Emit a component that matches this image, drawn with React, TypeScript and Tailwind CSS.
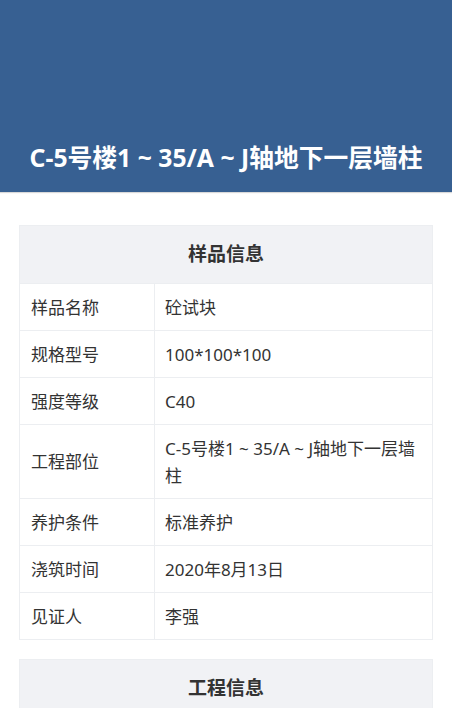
const sample: [string, string][] = [
  ['样品名称', '砼试块'],
  ['规格型号', '100*100*100'],
  ['强度等级', 'C40'],
  ['工程部位', 'C-5号楼1 ~ 35/A ~ J轴地下一层墙柱'],
  ['养护条件', '标准养护'],
  ['浇筑时间', '2020年8月13日'],
  ['见证人', '李强'],
]

function InfoTable({ title, rows }: { title: string; rows: [string, string][] }) {
  return (
    <div className="mx-[19px] border border-[#eceef1]">
      <div className="bg-[#f1f2f5] py-[15px] text-center text-[19px] leading-[27px] font-bold text-[#333]">
        {title}
      </div>
      {rows.map(([k, v], i) => (
        <div key={i} className="flex border-t border-[#eceef1] text-[17px] leading-[27px] text-[#333]">
          <div className="flex w-[135px] shrink-0 items-center border-r border-[#eceef1] py-[9.5px] pl-[11px]">{k}</div>
          <div className="flex flex-1 items-center py-[9.5px] pl-[10px] pr-[12px]">{v}</div>
        </div>
      ))}
    </div>
  )
}

export default function App() {
  return (
    <div
      className="min-h-screen bg-white"
      style={{ fontFamily: '"Noto Sans", "Noto Sans CJK SC", sans-serif' }}
    >
      <div className="flex h-[192px] items-end justify-center bg-[#376092] pb-[17px] shadow-[0_1px_1px_rgba(0,0,0,0.15)]">
        <h1 className="text-[24.75px] leading-[34px] font-bold text-white">C-5号楼1 ~ 35/A ~ J轴地下一层墙柱</h1>
      </div>
      <div className="flex flex-col gap-[19px] pt-[33px]">
        <InfoTable title="样品信息" rows={sample} />
        <InfoTable title="工程信息" rows={[['工程名称', '']]} />
      </div>
    </div>
  )
}
